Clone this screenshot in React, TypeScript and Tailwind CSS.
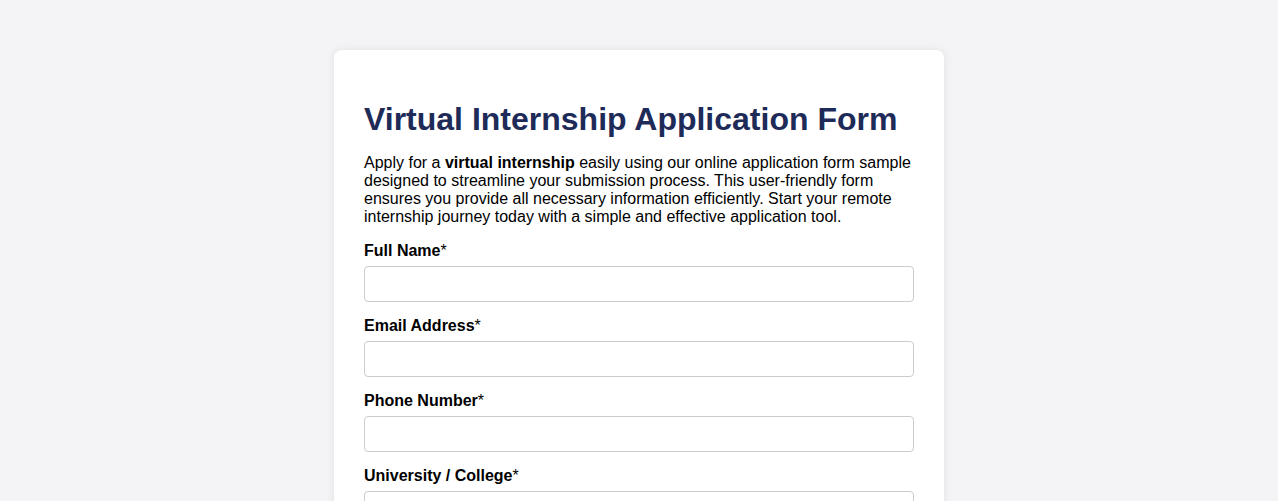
export default function App() {
  const fields = ["Full Name", "Email Address", "Phone Number", "University / College"];

  return (
    <div className="min-h-screen bg-[#f4f4f6] pt-[50px] pb-10 font-['Liberation_Sans',Arial,sans-serif] text-black">
      <div className="mx-auto w-[610px] rounded-lg bg-white px-[30px] pt-[51px] pb-8 shadow-[0_0_10px_rgba(0,0,0,0.08)]">
        <h1 className="mb-[17px] text-[32px] font-bold leading-[36px] text-[#1e2b58]">
          Virtual Internship Application Form
        </h1>
        <p className="mb-4 text-base leading-[18px]">
          Apply for a <strong>virtual internship</strong> easily using our online application form sample
          designed to streamline your submission process. This user-friendly form ensures you provide all
          necessary information efficiently. Start your remote internship journey today with a simple and
          effective application tool.
        </p>
        <form className="flex flex-col gap-[15px]">
          {fields.map((f) => (
            <div key={f} className="flex flex-col gap-[6px]">
              <label className="text-base font-bold leading-[18px]">
                {f}
                <span className="font-normal">*</span>
              </label>
              <input
                type="text"
                className="h-9 w-full rounded border border-[#cccccc] bg-white px-2 text-base outline-none"
              />
            </div>
          ))}
        </form>
      </div>
    </div>
  );
}
